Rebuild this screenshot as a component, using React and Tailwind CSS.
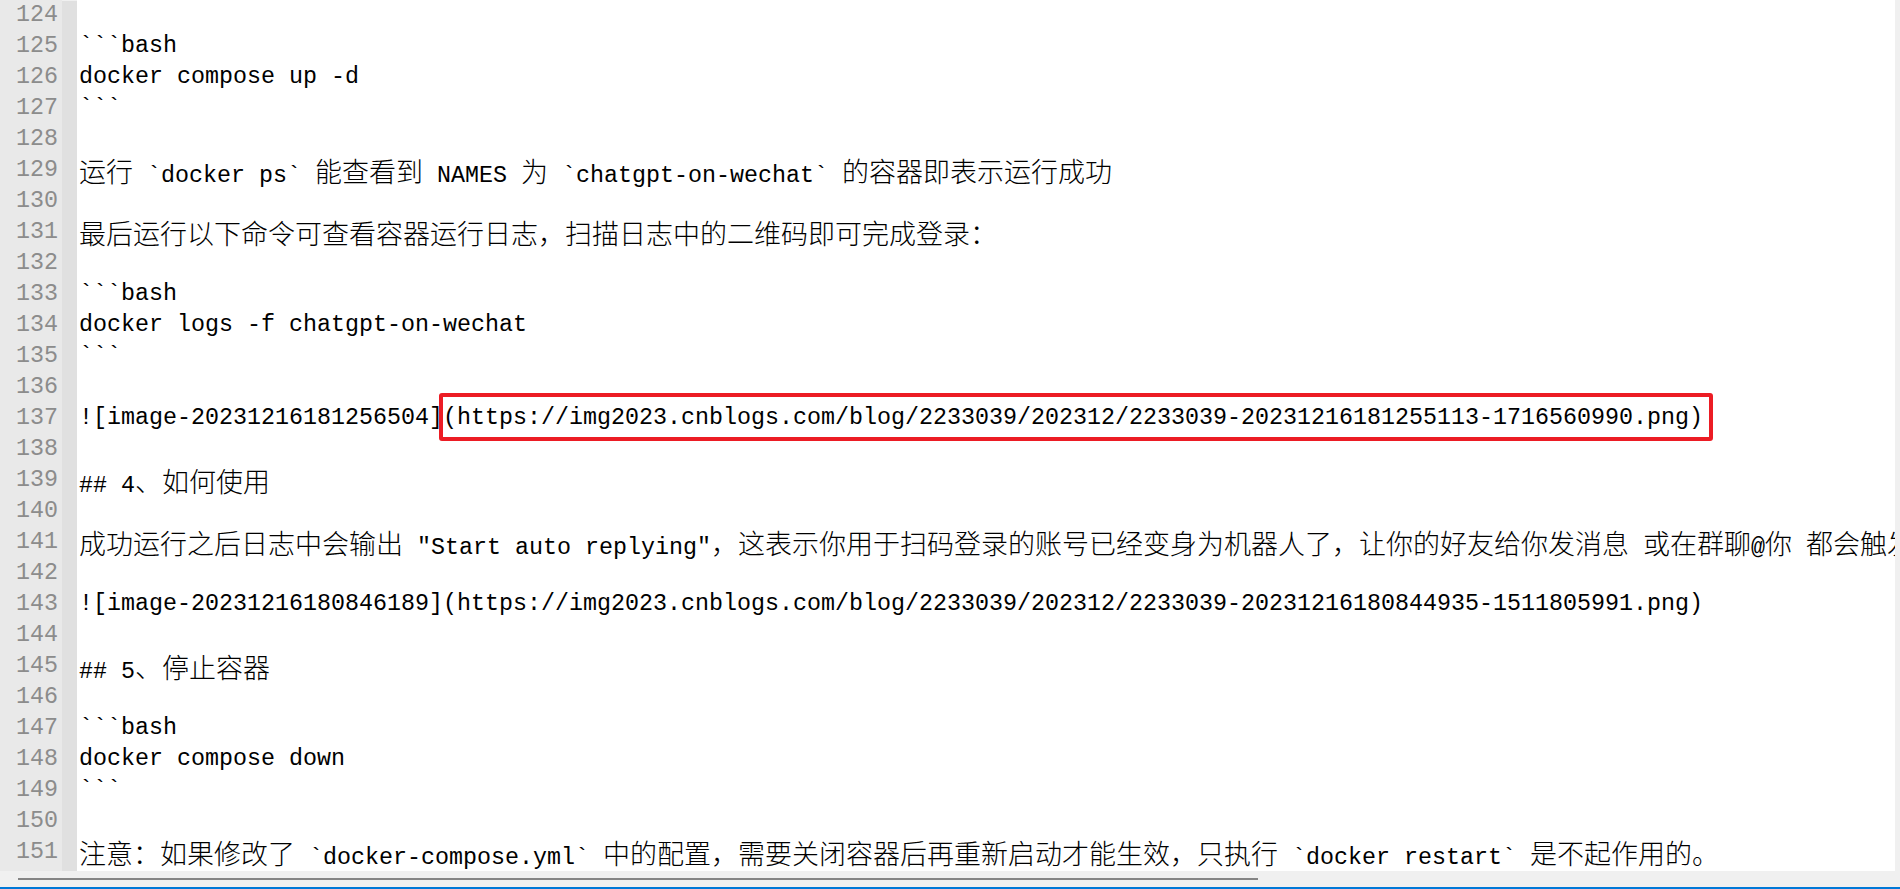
import React from 'react';

const lines = [
  '',
  '```bash',
  'docker compose up -d',
  '```',
  '',
  '运行 `docker ps` 能查看到 NAMES 为 `chatgpt-on-wechat` 的容器即表示运行成功',
  '',
  '最后运行以下命令可查看容器运行日志，扫描日志中的二维码即可完成登录：',
  '',
  '```bash',
  'docker logs -f chatgpt-on-wechat',
  '```',
  '',
  null, // 137, has the red box
  '',
  '## 4、如何使用',
  '',
  '成功运行之后日志中会输出 "Start auto replying"，这表示你用于扫码登录的账号已经变身为机器人了，让你的好友给你发消息 或在群聊@你 都会触发机器人自动回复',
  '',
  '![image-20231216180846189](https://img2023.cnblogs.com/blog/2233039/202312/2233039-20231216180844935-1511805991.png)',
  '',
  '## 5、停止容器',
  '',
  '```bash',
  'docker compose down',
  '```',
  '',
  '注意：如果修改了 `docker-compose.yml` 中的配置，需要关闭容器后再重新启动才能生效，只执行 `docker restart` 是不起作用的。',
];

const cjk = /([\u3000-\u303f\u4e00-\u9fff\uff00-\uffef]+)/;

function Text({ value }) {
  // split into cjk / latin runs, each gets its own font
  return value.split(cjk).map((part, i) =>
    part === '' ? null : cjk.test(part) ? (
      <span key={i} className="font-['Noto_Sans_CJK_SC',sans-serif] font-light text-[27px]">
        {part}
      </span>
    ) : (
      <span key={i} className="font-['Liberation_Mono',monospace] text-[23.33px]">
        {part}
      </span>
    )
  );
}

function Line({ text }) {
  if (text === null) {
    return (
      <div className="h-[31px] leading-[31px] whitespace-pre">
        <Text value="![image-20231216181256504]" />
        <span className="relative">
          <Text value="(https://img2023.cnblogs.com/blog/2233039/202312/2233039-20231216181255113-1716560990.png)" />
          <span className="absolute -top-[14px] -bottom-[12px] -left-[4px] -right-[10px] border-[4px] border-[#ec1c24] rounded-[3px]" />
        </span>
      </div>
    );
  }
  return (
    <div className="h-[31px] leading-[31px] whitespace-pre">
      <Text value={text} />
    </div>
  );
}

export default function App() {
  return (
    <div className="h-[889px] w-full bg-[#f0f0f0] flex flex-col overflow-hidden">
      <div className="flex h-[871px] mr-[5px] pt-[1px] overflow-hidden">
        <div className="w-[62px] -mt-[1px] bg-[#e9e9e9] pr-[4px] text-right text-[#8c8c8c]">
          {lines.map((_, i) => (
            <div key={i} className="h-[31px] leading-[31px] font-['Liberation_Mono',monospace] text-[23.33px]">
              {124 + i}
            </div>
          ))}
        </div>
        <div className="w-[15px] bg-[#e0e0e0]" />
        <div className="flex-1 -mt-[1px] bg-white pl-[2px] text-black overflow-hidden">
          {lines.map((t, i) => (
            <Line key={i} text={t} />
          ))}
        </div>
      </div>
      <div className="h-[16px] flex items-center pl-[18px]">
        <div className="h-[2px] w-[1240px] bg-[#858585]" />
      </div>
      <div className="h-[2px] bg-[#0078d7]" />
    </div>
  );
}
